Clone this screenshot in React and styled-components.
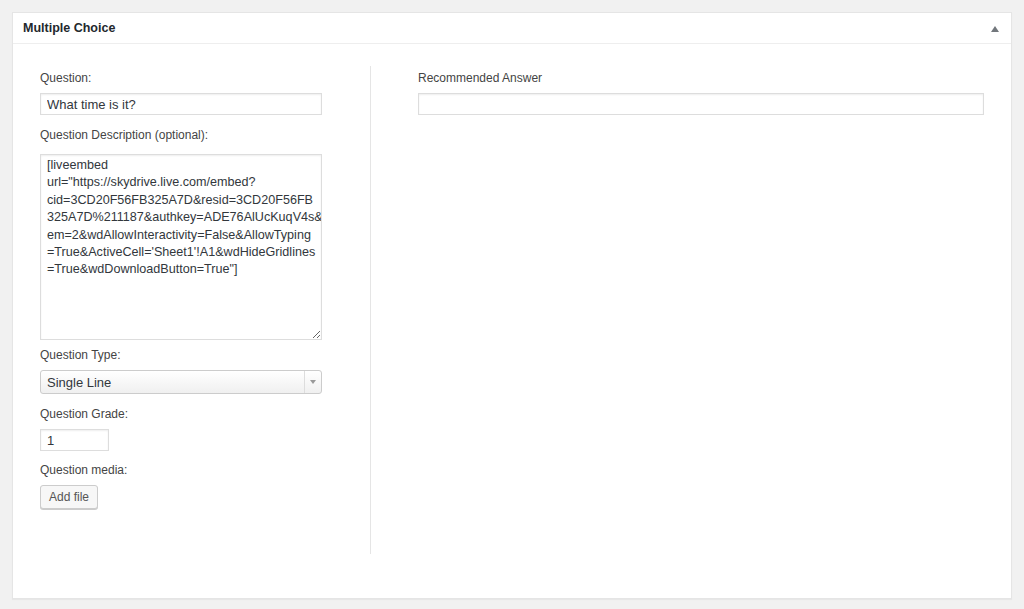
import styled, { createGlobalStyle } from 'styled-components';

const DESCRIPTION = [
	'[liveembed',
	'url="https://skydrive.live.com/embed?',
	'cid=3CD20F56FB325A7D&resid=3CD20F56FB',
	'325A7D%211187&authkey=ADE76AlUcKuqV4s&',
	'em=2&wdAllowInteractivity=False&AllowTyping',
	"=True&ActiveCell='Sheet1'!A1&wdHideGridlines",
	'=True&wdDownloadButton=True"]',
].join('\n');

const GlobalStyle = createGlobalStyle`
	html, body {
		margin: 0;
		padding: 0;
		background: #f1f1f1;
	}
	body {
		font-family: "Liberation Sans", Arial, sans-serif;
		color: #444;
	}
`;

export default function App() {
	return (
		<>
			<GlobalStyle />
			<Page>
				<Panel>
					<Header>
						<Title>Multiple Choice</Title>
						<Toggle viewBox='0 0 8 6' aria-hidden='true'>
							<path d='M4 0 L8 6 L0 6 Z' fill='#72777c' />
						</Toggle>
					</Header>
					<Body>
						<LeftColumn>
							<Field>
								<Label>Question:</Label>
								<TextInput defaultValue='What time is it?' />
							</Field>
							<Field $gap={12}>
								<Label>Question Description (optional):</Label>
								<TextArea defaultValue={DESCRIPTION} />
							</Field>
							<Field $gap={7}>
								<Label>Question Type:</Label>
								<Select>
									<SelectValue>Single Line</SelectValue>
									<SelectArrow>
										<svg width='6' height='4' viewBox='0 0 6 4'>
											<path d='M0 0 L6 0 L3 4 Z' fill='#999' />
										</svg>
									</SelectArrow>
								</Select>
							</Field>
							<Field $gap={12}>
								<Label>Question Grade:</Label>
								<TextInput defaultValue='1' $width={69} />
							</Field>
							<Field $gap={11}>
								<Label>Question media:</Label>
								<Button type='button'>Add file</Button>
							</Field>
						</LeftColumn>
						<Divider />
						<RightColumn>
							<Field>
								<Label>Recommended Answer</Label>
								<TextInput defaultValue='' />
							</Field>
						</RightColumn>
					</Body>
				</Panel>
			</Page>
		</>
	);
}

const Page = styled.div`
	padding: 12px;
	height: 609px;
	box-sizing: border-box;
`;

const Panel = styled.div`
	width: 1000px;
	height: 587px;
	box-sizing: border-box;
	background: #fff;
	border: 1px solid #e5e5e5;
	box-shadow: 0 1px 1px rgba(0, 0, 0, 0.04);
	display: flex;
	flex-direction: column;
`;

const Header = styled.div`
	height: 31px;
	box-sizing: border-box;
	border-bottom: 1px solid #eee;
	display: flex;
	align-items: center;
	justify-content: space-between;
	padding: 0 12px 0 10px;
`;

const Title = styled.h2`
	margin: 0;
	font-size: 12.5px;
	font-weight: 700;
	color: #23282d;
	line-height: 1;
`;

const Toggle = styled.svg`
	width: 8px;
	height: 6px;
	margin-top: 2px;
`;

const Body = styled.div`
	display: flex;
	padding: 22px 27px 0;
	height: 510px;
	box-sizing: border-box;
`;

const LeftColumn = styled.div`
	width: 282px;
	padding-top: 4px;
`;

const Divider = styled.div`
	width: 1px;
	height: 488px;
	background: #e5e5e5;
	margin: 0 47px 0 48px;
`;

const RightColumn = styled.div`
	flex: 1;
	padding-top: 4px;
`;

const Field = styled.div`
	display: flex;
	flex-direction: column;
	align-items: flex-start;
	margin-top: ${(p) => p.$gap || 0}px;
`;

const Label = styled.label`
	font-size: 12px;
	line-height: 16px;
	color: #444;
	margin-bottom: 7px;
`;

const TextInput = styled.input`
	width: ${(p) => (p.$width ? `${p.$width}px` : '100%')};
	height: 22px;
	box-sizing: border-box;
	border: 1px solid #ddd;
	box-shadow: inset 0 1px 2px rgba(0, 0, 0, 0.07);
	padding: 0 6px;
	font-family: "Liberation Sans", Arial, sans-serif;
	font-size: 13px;
	color: #32373c;
	background: #fff;
	outline: none;
`;

const TextArea = styled.textarea`
	width: 100%;
	height: 186px;
	margin-top: 4px;
	box-sizing: border-box;
	border: 1px solid #ddd;
	box-shadow: inset 0 1px 2px rgba(0, 0, 0, 0.07);
	padding: 2px 6px;
	font-family: "Liberation Sans", Arial, sans-serif;
	font-size: 12.6px;
	line-height: 17.4px;
	color: #32373c;
	white-space: pre;
	overflow: hidden;
	resize: vertical;
	outline: none;
`;

const Select = styled.div`
	width: 100%;
	height: 24px;
	box-sizing: border-box;
	border: 1px solid #ccc;
	border-radius: 3px;
	background: linear-gradient(#fff, #f0f0f0);
	display: flex;
	align-items: center;
	font-size: 13px;
	color: #32373c;
`;

const SelectValue = styled.span`
	flex: 1;
	padding-left: 6px;
`;

const SelectArrow = styled.span`
	width: 16px;
	height: 100%;
	border-left: 1px solid #ddd;
	display: flex;
	align-items: center;
	justify-content: center;
`;

const Button = styled.button`
	height: 24px;
	padding: 0 8px;
	border: 1px solid #ccc;
	border-radius: 3px;
	background: #f7f7f7;
	box-shadow: 0 1px 0 #ccc;
	font-family: "Liberation Sans", Arial, sans-serif;
	font-size: 12px;
	color: #555;
	cursor: pointer;
`;
